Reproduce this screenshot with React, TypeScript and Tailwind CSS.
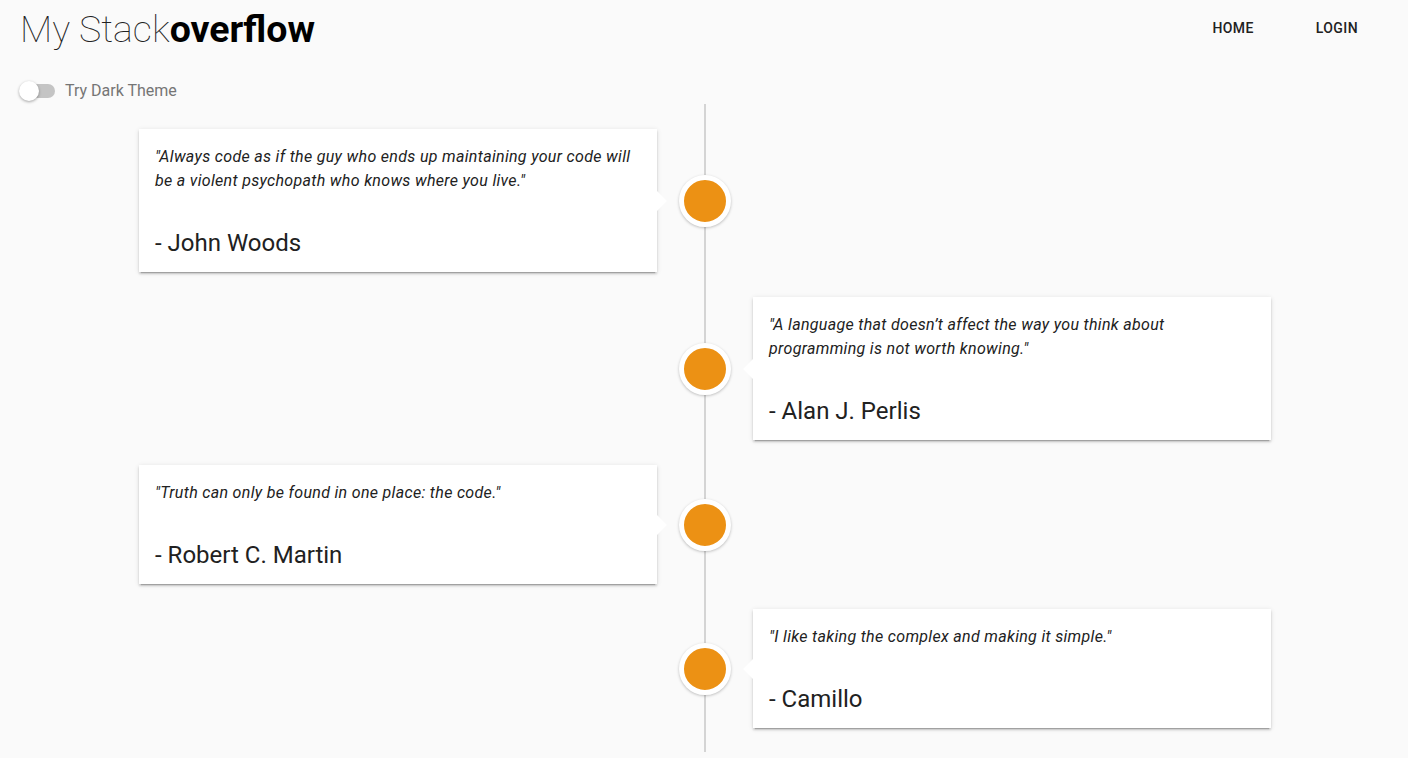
import {memo} from 'react'

interface Quote {
  text: string
  author: string
  side: 'left' | 'right'
}

const QUOTES: Quote[] = [
  {
    text: '"Always code as if the guy who ends up maintaining your code will be a violent psychopath who knows where you live."',
    author: '- John Woods',
    side: 'left',
  },
  {
    text: '"A language that doesn\u2019t affect the way you think about programming is not worth knowing."',
    author: '- Alan J. Perlis',
    side: 'right',
  },
  {
    text: '"Truth can only be found in one place: the code."',
    author: '- Robert C. Martin',
    side: 'left',
  },
  {
    text: '"I like taking the complex and making it simple."',
    author: '- Camillo',
    side: 'right',
  },
]

const QuoteCard = memo(function QuoteCard({quote}: {quote: Quote}) {
  const left = quote.side === 'left'
  return (
    <div className="relative w-[518px] bg-white px-4 pt-4 pb-[13px] shadow-[0_3px_1px_-2px_rgba(0,0,0,0.2),0_2px_2px_0_rgba(0,0,0,0.14),0_1px_5px_0_rgba(0,0,0,0.12)]">
      <span
        className={`absolute top-1/2 h-[14px] w-[14px] -translate-y-1/2 rotate-45 bg-white ${
          left ? 'right-[-7px]' : 'left-[-7px]'
        }`}
      />
      <p className="relative text-[16px] leading-6 tracking-[0.32px] italic text-[#212121]">
        {quote.text}
      </p>
      <div className="relative mt-[34px] text-[24px] leading-8 text-[#212121]">
        {quote.author}
      </div>
    </div>
  )
})

export default function App() {
  return (
    <div className="min-h-[758px] bg-[#fafafa] font-['Roboto',sans-serif] text-[#212121]">
      <header className="flex h-14 items-center justify-between pl-5 pr-[50px]">
        <h1 className="pt-[3px] text-[37.5px] leading-none text-[#212121]">
          <span className="font-thin">My Stack</span>
          <span className="font-bold text-black">overflow</span>
        </h1>
        <nav className="flex gap-[62px] text-[14px] font-medium tracking-[0.4px] text-[#212121]">
          <span>HOME</span>
          <span>LOGIN</span>
        </nav>
      </header>

      <div className="flex items-center gap-[10px] pt-[23px] pl-[19px]">
        <div className="relative flex h-5 w-[36px] items-center">
          <span className="ml-[3px] h-[14px] w-[33px] rounded-full bg-[#c4c4c4]" />
          <span className="absolute left-0 top-0 h-5 w-5 rounded-full bg-white shadow-[0_1px_3px_rgba(0,0,0,0.35)]" />
        </div>
        <span className="text-[16px] text-[#757575]">Try Dark Theme</span>
      </div>

      <section className="relative mt-[1px] flex flex-col gap-[25px] pt-[25px] pb-[24px] before:absolute before:top-0 before:bottom-0 before:left-[704px] before:w-[2px] before:bg-[#d4d4d4] before:content-['']">
        {QUOTES.map((q) => (
          <div
            key={q.author}
            className="relative grid grid-cols-[657px_96px_1fr] items-center"
          >
            <div className="flex justify-end">
              {q.side === 'left' && <QuoteCard quote={q} />}
            </div>
            <div className="flex justify-center">
              <span className="h-[52px] w-[52px] rounded-full border-[5px] border-white bg-[#ec9114] shadow-[0_1px_3px_rgba(0,0,0,0.25)]" />
            </div>
            <div className="flex justify-start">
              {q.side === 'right' && <QuoteCard quote={q} />}
            </div>
          </div>
        ))}
      </section>
    </div>
  )
}
